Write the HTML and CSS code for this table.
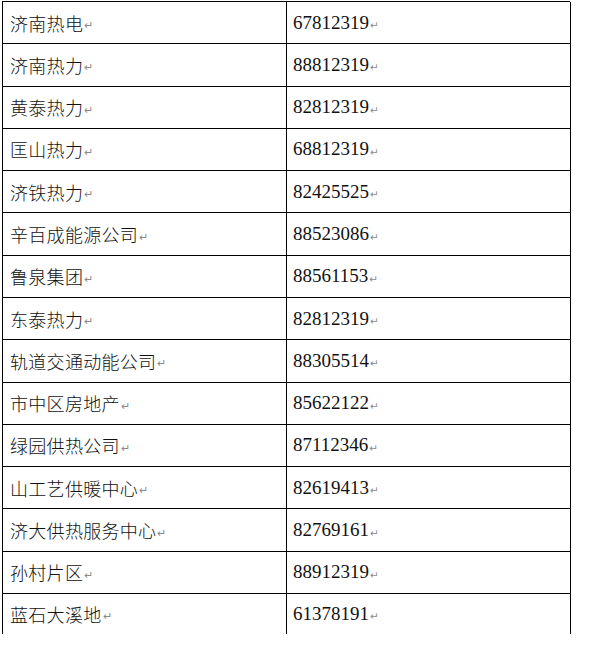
FILE: index.html
```html
<!DOCTYPE html>
<html lang="zh">
<head>
<meta charset="utf-8">
<title>供热单位电话</title>
<link rel="stylesheet" href="styles.css">
</head>
<body>
<div class="table">
  <div class="cell name">济南热电<span class="pm">↵</span></div><div class="cell num">67812319<span class="pm">↵</span></div>
  <div class="cell name">济南热力<span class="pm">↵</span></div><div class="cell num">88812319<span class="pm">↵</span></div>
  <div class="cell name">黄泰热力<span class="pm">↵</span></div><div class="cell num">82812319<span class="pm">↵</span></div>
  <div class="cell name">匡山热力<span class="pm">↵</span></div><div class="cell num">68812319<span class="pm">↵</span></div>
  <div class="cell name">济铁热力<span class="pm">↵</span></div><div class="cell num">82425525<span class="pm">↵</span></div>
  <div class="cell name">辛百成能源公司<span class="pm">↵</span></div><div class="cell num">88523086<span class="pm">↵</span></div>
  <div class="cell name">鲁泉集团<span class="pm">↵</span></div><div class="cell num">88561153<span class="pm">↵</span></div>
  <div class="cell name">东泰热力<span class="pm">↵</span></div><div class="cell num">82812319<span class="pm">↵</span></div>
  <div class="cell name">轨道交通动能公司<span class="pm">↵</span></div><div class="cell num">88305514<span class="pm">↵</span></div>
  <div class="cell name">市中区房地产<span class="pm">↵</span></div><div class="cell num">85622122<span class="pm">↵</span></div>
  <div class="cell name">绿园供热公司<span class="pm">↵</span></div><div class="cell num">87112346<span class="pm">↵</span></div>
  <div class="cell name">山工艺供暖中心<span class="pm">↵</span></div><div class="cell num">82619413<span class="pm">↵</span></div>
  <div class="cell name">济大供热服务中心<span class="pm">↵</span></div><div class="cell num">82769161<span class="pm">↵</span></div>
  <div class="cell name">孙村片区<span class="pm">↵</span></div><div class="cell num">88912319<span class="pm">↵</span></div>
  <div class="cell name last">蓝石大溪地<span class="pm">↵</span></div><div class="cell num last">61378191<span class="pm">↵</span></div>
</div>
</body>
</html>
```

FILE: styles.css
```css
html, body {
  margin: 0;
  padding: 0;
  background: #ffffff;
}

.table {
  margin: 1px 0 0 2px;
  width: 568px;
  display: grid;
  grid-template-columns: 284px 284px;
  grid-template-rows: repeat(14, 42.29px) 40px;
  border-left: 1px solid #000;
  border-top: 1px solid #000;
  box-sizing: border-box;
}

.cell {
  box-sizing: border-box;
  border-right: 1px solid #000;
  border-bottom: 1px solid #000;
  display: flex;
  align-items: center;
  color: #111111;
  white-space: nowrap;
}

.cell.last {
  border-bottom: none;
}

.name {
  padding-left: 7px;
  font-family: "Noto Sans CJK SC", sans-serif;
  font-weight: 300;
  font-size: 18px;
  letter-spacing: 0.3px;
}

.num {
  padding-left: 6px;
  font-family: "Liberation Serif", serif;
  font-size: 19px;
}

.pm {
  font-family: "DejaVu Sans", sans-serif;
  font-size: 10.5px;
  color: #8a8a8a;
  letter-spacing: 0;
  align-self: center;
  margin-top: 5px;
  margin-left: 1px;
}
```
